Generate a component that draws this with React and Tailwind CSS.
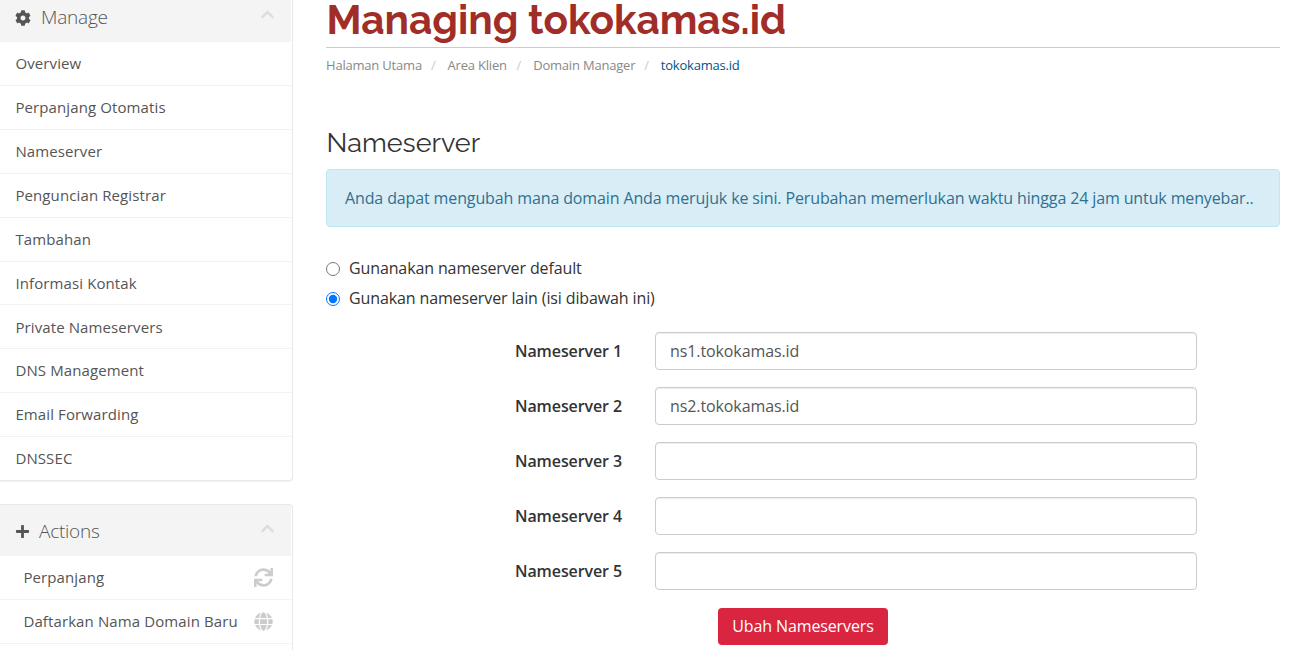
import { FaCog, FaPlus, FaSync, FaGlobe, FaChevronUp } from "react-icons/fa";

const manageItems = [
  "Overview",
  "Perpanjang Otomatis",
  "Nameserver",
  "Penguncian Registrar",
  "Tambahan",
  "Informasi Kontak",
  "Private Nameservers",
  "DNS Management",
  "Email Forwarding",
  "DNSSEC",
];

const nameservers = ["ns1.tokokamas.id", "ns2.tokokamas.id", "", "", ""];

function Sidebar() {
  return (
    <aside className="w-[293px] shrink-0 text-[15px] tracking-[0.11px] font-normal text-[#555]">
      <section className="rounded-br border-r border-b border-[#e8e8e8] pr-px shadow-[0_1px_1px_rgba(0,0,0,0.05)]">
        <header className="flex h-[42.15px] items-start bg-[#f4f4f4] pl-[15px] pr-4 pt-[4px]">
          <FaCog className="mt-[6px] size-4 text-[#555]" />
          <h3 className="ml-[10px] text-[19px] leading-[26px] font-light tracking-[-0.2px]">Manage</h3>
          <FaChevronUp className="ml-auto mt-[3px] size-[15px] text-[#ddd]" />
        </header>
        <ul>
          {manageItems.map((item) => (
            <li key={item} className="flex h-[43.88px] items-center border-b border-[#f2f2f2] pl-[15.4px] last:h-[43px] last:border-0">
              {item}
            </li>
          ))}
        </ul>
      </section>
      <section className="mt-[23px] rounded-tr border-t border-r border-[#e8e8e8] pr-px">
        <header className="flex h-[51px] items-start bg-[#f4f4f4] pl-[15px] pr-4 pt-[13px]">
          <FaPlus className="mt-[6px] size-[15px] text-[#555]" />
          <h3 className="ml-[9px] text-[19px] leading-[26px] font-light tracking-[-0.25px]">Actions</h3>
          <FaChevronUp className="ml-auto mt-[3px] size-[15px] text-[#ddd]" />
        </header>
        <ul>
          <li className="flex h-[44px] items-center justify-between border-b border-[#f2f2f2] pl-[23.4px] pr-[18px]">
            Perpanjang
            <FaSync className="size-[19px] text-[#ccc]" />
          </li>
          <li className="flex h-[44px] items-center justify-between border-b border-[#f2f2f2] pl-[23.4px] pr-[18px]">
            Daftarkan Nama Domain Baru
            <FaGlobe className="size-[19px] text-[#ccc]" />
          </li>
          <li className="h-2" />
        </ul>
      </section>
    </aside>
  );
}

function Breadcrumb() {
  return (
    <nav className="mt-[7px] flex h-5 items-center text-[13px] leading-5 tracking-[-0.2px] whitespace-nowrap text-[#888]">
      <span className="w-[96px]">Halaman Utama</span>
      <span className="mr-[12px] ml-[9px] text-[#ccc]">/</span>
      <span className="w-[60px]">Area Klien</span>
      <span className="mr-[12px] ml-[9px] text-[#ccc]">/</span>
      <span className="w-[102px]">Domain Manager</span>
      <span className="mr-[12px] ml-[9px] text-[#ccc]">/</span>
      <span className="text-[#058]">tokokamas.id</span>
    </nav>
  );
}

function Radio({ label, checked }) {
  return (
    <label className="flex h-[30px] items-center text-[16px] tracking-[-0.12px]">
      <input type="radio" name="nschoice" defaultChecked={checked} className="mt-px mr-[9px] size-[14px]" />
      {label}
    </label>
  );
}

export default function App() {
  return (
    <div className="flex h-[650px] w-[1290px] overflow-hidden bg-white font-['Open_Sans',sans-serif] text-[#333]">
      <Sidebar />
      <main className="ml-[33px] w-[954px] shrink-0">
        <h1 className="h-[48px] border-b border-[#ccc] pl-[0.5px] font-[Raleway,Lato,sans-serif] text-[40.5px] leading-[39px] font-bold whitespace-nowrap text-[#a02d28]">
          Managing tokokamas.id
        </h1>
        <Breadcrumb />
        <h2 className="mt-[51px] h-[43px] pl-[0.5px] font-[Raleway,Lato,sans-serif] text-[27px] leading-[34px] font-normal">
          Nameserver
        </h2>
        <div className="flex h-[58px] items-center rounded border border-[#bce8f1] bg-[#d9edf7] pl-[18px] text-[16px] tracking-[-0.125px] whitespace-nowrap text-[#31708f]">
          Anda dapat mengubah mana domain Anda merujuk ke sini. Perubahan memerlukan waktu hingga 24 jam untuk menyebar..
        </div>
        <div className="mt-[26px]">
          <Radio label="Gunanakan nameserver default" />
          <Radio label="Gunakan nameserver lain (isi dibawah ini)" checked />
        </div>
        <div className="mt-[19px] flex flex-col gap-[17px]">
          {nameservers.map((value, i) => (
            <div key={i} className="flex h-[38.1px] items-center">
              <label className="w-[296px] text-right text-[16px] tracking-[-0.1px] font-semibold">{"Nameserver " + (i + 1)}</label>
              <input
                type="text"
                defaultValue={value}
                className="ml-[33px] h-full w-[542px] rounded border border-[#ccc] px-[14px] text-[16px] tracking-[-0.1px] text-[#555] shadow-[inset_0_1px_1px_rgba(0,0,0,0.075)]"
              />
            </div>
          ))}
        </div>
        <button className="mt-[17.5px] ml-[392px] flex h-[37px] w-[170px] items-center justify-center rounded bg-[#d9253f] text-[16px] tracking-[-0.12px] whitespace-nowrap text-white">
          Ubah Nameservers
        </button>
      </main>
    </div>
  );
}
